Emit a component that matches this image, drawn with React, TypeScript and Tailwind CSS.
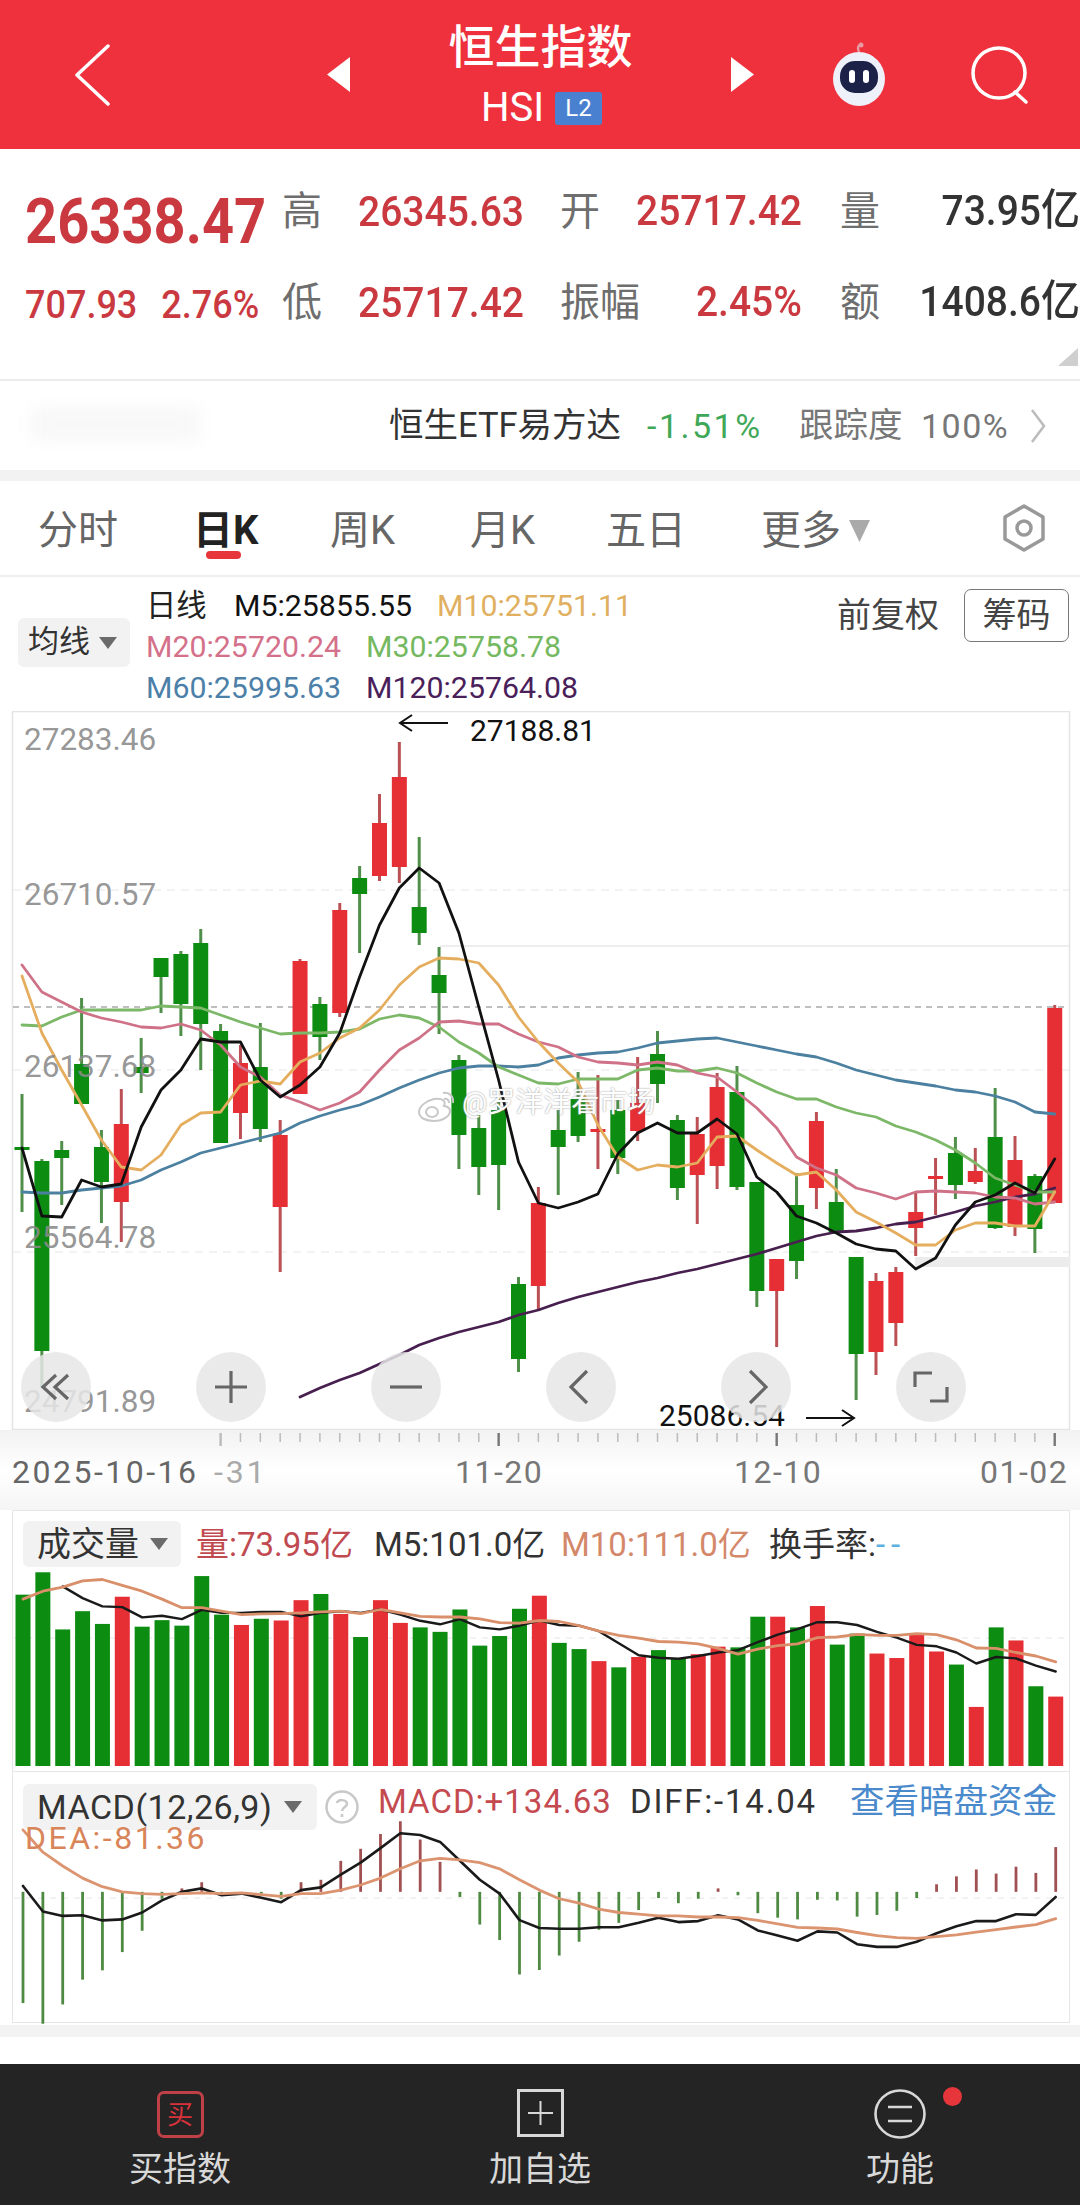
import React from "react";

const X = (i: number) => 22 + 19.86 * i;
const RED = "#e62e35";
const GREEN = "#0d8c12";
const WRED = "#bb5055";
const WGREEN = "#4f8f4a";

// [up?, wickTop, bodyTop, bodyBottom, wickBottom]
const candles: [number, number, number, number, number][] = [
  [0, 1094, 1147, 1150, 1212], [0, 1159, 1161, 1351, 1388], [0, 1141, 1150, 1158, 1205], [0, 998, 1064, 1104, 1104],
  [0, 1130, 1147, 1182, 1223], [1, 1089, 1124, 1202, 1242], [0, 1038, 1067, 1073, 1093], [0, 958, 958, 977, 1013],
  [0, 951, 954, 1004, 1036], [0, 929, 943, 1024, 1070], [0, 1024, 1031, 1143, 1143], [1, 1045, 1063, 1113, 1139],
  [0, 1023, 1067, 1129, 1142], [1, 1120, 1135, 1207, 1272], [1, 959, 961, 1094, 1094], [0, 997, 1004, 1037, 1060],
  [1, 903, 910, 1013, 1017], [0, 866, 878, 894, 953], [1, 794, 823, 876, 881], [1, 742, 777, 867, 883],
  [0, 837, 907, 933, 945], [0, 947, 975, 993, 1034], [0, 1055, 1060, 1135, 1169], [0, 1115, 1128, 1167, 1195],
  [0, 1095, 1110, 1165, 1210], [0, 1277, 1284, 1359, 1372], [1, 1187, 1203, 1286, 1310], [0, 1110, 1130, 1147, 1195],
  [0, 1072, 1099, 1136, 1142], [1, 1075, 1129, 1132, 1169], [0, 1100, 1110, 1158, 1174], [1, 1057, 1103, 1131, 1141],
  [0, 1031, 1054, 1084, 1103], [0, 1115, 1120, 1188, 1200], [1, 1117, 1134, 1175, 1224], [1, 1073, 1087, 1166, 1189],
  [0, 1066, 1092, 1187, 1190], [0, 1182, 1182, 1291, 1307], [1, 1259, 1259, 1291, 1347], [0, 1173, 1205, 1261, 1279],
  [1, 1112, 1121, 1188, 1209], [0, 1169, 1202, 1233, 1233], [0, 1257, 1257, 1354, 1400], [1, 1273, 1281, 1352, 1375],
  [1, 1267, 1272, 1323, 1346], [1, 1192, 1212, 1228, 1256], [1, 1158, 1176, 1179, 1215], [0, 1137, 1153, 1185, 1199],
  [1, 1148, 1171, 1182, 1184], [0, 1088, 1137, 1228, 1229], [1, 1136, 1160, 1227, 1236], [0, 1174, 1176, 1229, 1253],
  [1, 1005, 1008, 1203, 1203],
];

const m5 = [1148, 1216, 1217, 1180, 1187, 1184, 1127, 1090, 1070, 1039, 1042, 1042, 1080, 1097, 1085, 1067, 1033, 977, 925, 888, 868, 883, 933, 1007, 1080, 1162, 1203, 1208, 1202, 1194, 1154, 1133, 1123, 1133, 1133, 1119, 1134, 1177, 1192, 1216, 1223, 1233, 1244, 1249, 1251, 1269, 1258, 1225, 1202, 1195, 1183, 1193, 1159];
const m10 = [976, 1033, 1070, 1105, 1140, 1167, 1170, 1155, 1125, 1113, 1112, 1085, 1081, 1084, 1062, 1053, 1038, 1028, 1010, 985, 967, 958, 959, 963, 985, 1017, 1042, 1063, 1082, 1125, 1157, 1170, 1165, 1167, 1163, 1137, 1136, 1150, 1163, 1175, 1172, 1190, 1212, 1222, 1233, 1245, 1245, 1230, 1223, 1223, 1226, 1226, 1192];
const m20 = [965, 992, 1002, 1012, 1018, 1022, 1027, 1028, 1024, 1030, 1045, 1067, 1077, 1095, 1102, 1110, 1103, 1092, 1070, 1050, 1038, 1022, 1021, 1024, 1024, 1034, 1042, 1047, 1057, 1062, 1063, 1065, 1062, 1065, 1073, 1077, 1092, 1108, 1128, 1157, 1168, 1175, 1188, 1193, 1199, 1192, 1191, 1192, 1193, 1197, 1198, 1204, 1202];
const m30 = [1025, 1026, 1017, 1010, 1010, 1010, 1010, 1006, 1007, 1008, 1015, 1022, 1028, 1034, 1033, 1033, 1032, 1029, 1019, 1015, 1018, 1027, 1042, 1053, 1067, 1075, 1083, 1084, 1079, 1079, 1079, 1070, 1068, 1071, 1071, 1068, 1073, 1083, 1092, 1099, 1099, 1107, 1113, 1117, 1126, 1132, 1140, 1150, 1163, 1178, 1185, 1192, 1192];
const m60 = [1192, 1193, 1193, 1190, 1188, 1186, 1180, 1170, 1162, 1153, 1148, 1143, 1138, 1133, 1123, 1116, 1110, 1105, 1097, 1088, 1080, 1073, 1068, 1066, 1066, 1067, 1065, 1058, 1055, 1053, 1052, 1048, 1043, 1041, 1039, 1038, 1042, 1046, 1050, 1054, 1057, 1063, 1070, 1075, 1080, 1083, 1086, 1090, 1092, 1096, 1102, 1112, 1114];
const m120 = [1397, 1388, 1380, 1373, 1364, 1355, 1345, 1338, 1332, 1327, 1322, 1315, 1310, 1303, 1297, 1292, 1287, 1282, 1278, 1273, 1269, 1264, 1259, 1254, 1248, 1242, 1236, 1232, 1231, 1228, 1224, 1222, 1217, 1212, 1206, 1202, 1197, 1194, 1188];

const Z = (z: number) => 1500 + z / 2.904;
const volTops = [272, 207, 373, 320, 357, 278, 365, 346, 362, 218, 330, 360, 342, 347, 288, 270, 328, 395, 288, 354, 367, 380, 315, 420, 392, 313, 275, 412, 430, 465, 483, 453, 433, 458, 445, 423, 425, 336, 336, 367, 305, 417, 385, 443, 456, 388, 437, 475, 598, 367, 405, 538, 568];
const volRedIdx = new Set([5, 11, 13, 14, 16, 18, 19, 26, 29, 31, 34, 35, 38, 40, 43, 44, 45, 46, 48, 50, 52]);
const vm5 = [248, 282, 306, 308, 338, 333, 343, 316, 325, 325, 322, 322, 335, 325, 320, 325, 315, 330, 348, 358, 343, 367, 373, 362, 347, 360, 362, 378, 413, 448, 455, 458, 450, 440, 433, 410, 388, 372, 352, 352, 360, 380, 397, 418, 422, 440, 472, 453, 457, 478, 495];
const vm10 = [285, 262, 250, 232, 228, 245, 262, 285, 310, 310, 320, 330, 328, 327, 325, 322, 320, 327, 315, 325, 335, 337, 337, 342, 353, 355, 347, 350, 362, 378, 390, 398, 408, 410, 415, 428, 445, 430, 420, 415, 397, 395, 387, 390, 390, 385, 388, 403, 427, 428, 440, 450, 467];

const macdHist = [1458, 1518, 1462, 1390, 1363, 1310, 1248, 1155, 1125, 1107, 1140, 1135, 1140, 1155, 1107, 1100, 1045, 1010, 967, 930, 983, 1048, 1150, 1230, 1275, 1375, 1362, 1320, 1280, 1245, 1225, 1188, 1153, 1168, 1155, 1125, 1145, 1197, 1210, 1215, 1158, 1160, 1207, 1202, 1190, 1153, 1113, 1090, 1070, 1082, 1062, 1080, 1005];
const diff = [1118, 1192, 1205, 1203, 1218, 1215, 1195, 1160, 1135, 1125, 1145, 1140, 1152, 1165, 1130, 1122, 1085, 1050, 1008, 965, 970, 990, 1045, 1100, 1140, 1217, 1240, 1242, 1242, 1238, 1238, 1225, 1210, 1223, 1220, 1203, 1215, 1247, 1262, 1277, 1250, 1253, 1287, 1295, 1295, 1280, 1255, 1235, 1220, 1220, 1200, 1202, 1150];
const dea = [955, 1020, 1060, 1095, 1120, 1135, 1140, 1142, 1140, 1138, 1140, 1138, 1143, 1148, 1140, 1140, 1130, 1115, 1095, 1068, 1045, 1038, 1042, 1050, 1068, 1100, 1130, 1155, 1168, 1185, 1195, 1200, 1205, 1205, 1208, 1208, 1210, 1218, 1228, 1238, 1240, 1243, 1253, 1262, 1268, 1270, 1265, 1260, 1252, 1245, 1237, 1230, 1213];

const line = (ys: number[], start = 0) => ys.map((y, k) => `${X(k + start).toFixed(1)},${y.toFixed(1)}`).join(" ");

function Line({ ys, start = 0, color, w = 2.8 }: { ys: number[]; start?: number; color: string; w?: number }) {
  return <polyline points={line(ys, start)} fill="none" stroke={color} strokeWidth={w} strokeLinejoin="round" strokeLinecap="round" />;
}

function Caret({ className = "" }: { className?: string }) {
  return (
    <svg viewBox="0 0 18 12" className={`w-[18px] h-[12px] ${className}`}>
      <path d="M0 0H18L9 12Z" fill="#6b6b6b" />
    </svg>
  );
}

function PriceChart() {
  return (
    <svg viewBox="0 711 1080 719" className="absolute inset-0 w-full h-full">
      <rect x="12.5" y="711.5" width="1057" height="718" fill="none" stroke="#e4e4e4" strokeWidth="1.5" />
      <line x1="13" x2="1069" y1="890" y2="890" stroke="#e6e6e6" strokeDasharray="8 6" />
      <line x1="13" x2="1069" y1="1070" y2="1070" stroke="#e6e6e6" strokeDasharray="8 6" />
      <line x1="13" x2="1069" y1="1252" y2="1252" stroke="#e6e6e6" strokeDasharray="8 6" />
      <line x1="440" x2="1069" y1="946" y2="946" stroke="#e8e8e8" strokeWidth="1.5" />
      <rect x="915" y="1257" width="155" height="10" fill="#ececec" />
      <line x1="13" x2="1069" y1="1007" y2="1007" stroke="#aaaaaa" strokeWidth="1.5" strokeDasharray="6 5" />
      {candles.map(([up, wt, bt, bb, wb], i) => (
        <g key={i}>
          <line x1={X(i)} x2={X(i)} y1={wt} y2={wb} stroke={up ? WRED : WGREEN} strokeWidth="3" />
          <rect x={X(i) - 7.5} y={bt} width="15" height={bb - bt} fill={up ? RED : GREEN} />
        </g>
      ))}
      <Line ys={m120} start={14} color="#47204f" />
      <Line ys={m60} color="#4c80a0" />
      <Line ys={m30} color="#7cb868" />
      <Line ys={m20} color="#cf7288" />
      <Line ys={m10} color="#e5ae5e" />
      <Line ys={m5} color="#111111" w={2.8} />
    </svg>
  );
}

function Overlay({ x, y, c, children }: { x: number; y: number; c: string; children: React.ReactNode }) {
  return (
    <span className={`absolute -translate-y-1/2 whitespace-nowrap ${c}`} style={{ left: x, top: y - 711 }}>
      {children}
    </span>
  );
}

function RoundBtn({ x, children }: { x: number; children: React.ReactNode }) {
  return (
    <div
      className="absolute w-[70px] h-[70px] rounded-full bg-[#e6e6e6]/85 flex items-center justify-center"
      style={{ left: x - 35, top: 1387 - 711 - 35 }}
    >
      <svg viewBox="0 0 40 40" className="w-[40px] h-[40px]" fill="none" stroke="#666666" strokeWidth="3.2">
        {children}
      </svg>
    </div>
  );
}

function Footer() {
  return (
    <div className="h-[141px] bg-[#242424] grid grid-cols-3 text-[#d8d8d8] text-[34px]">
      <div className="flex flex-col items-center pt-[27px]">
        <div className="w-[47px] h-[47px] rounded-[7px] border-[3px] border-[#c04048] flex items-center justify-center text-[#d8323c] text-[26px] leading-none">买</div>
        <div className="leading-[40px] mt-[11px]">买指数</div>
      </div>
      <div className="flex flex-col items-center pt-[25px]">
        <svg viewBox="0 0 47 48" className="w-[47px] h-[48px]" fill="none" stroke="#d8d8d8" strokeWidth="3">
          <rect x="1.5" y="1.5" width="44" height="45" />
          <path d="M23.5 12V36M11 24H36" strokeWidth="2" />
        </svg>
        <div className="leading-[40px] mt-[12px]">加自选</div>
      </div>
      <div className="flex flex-col items-center pt-[25px] relative">
        <svg viewBox="0 0 52 50" className="w-[52px] h-[50px]" fill="none" stroke="#d8d8d8" strokeWidth="2.6">
          <ellipse cx="26" cy="25" rx="24.5" ry="23.5" />
          <path d="M14 18H38M14 32H38" />
        </svg>
        <div className="leading-[40px] mt-[10px]">功能</div>
        <span className="absolute left-[223px] top-[23px] w-[19px] h-[19px] rounded-full bg-[#e6363c]" />
      </div>
    </div>
  );
}

export default function App() {
  return (
    <div className="w-[1080px] h-[2206px] bg-white overflow-hidden" style={{ fontFamily: "Roboto,'Noto Sans CJK SC',sans-serif" }}>
      {/* header */}
      <div className="h-[149px] bg-[#ee313c] flex items-center pl-[74px] text-white">
        <svg viewBox="0 0 36 62" className="w-[36px] h-[62px] shrink-0" fill="none" stroke="#ffffff" strokeWidth="3.5" strokeLinecap="round" strokeLinejoin="round">
          <path d="M34 2L3 31L34 60" />
        </svg>
        <svg viewBox="0 0 23 35" className="ml-[217px] w-[23px] h-[35px] shrink-0"><path d="M23 0V35L0 17.5Z" fill="#fff" /></svg>
        <div className="w-[381px] flex flex-col items-center">
          <div className="h-[60px] leading-[60px] text-[46px] font-medium">恒生指数</div>
          <div className="mt-[7px] h-[48px] flex items-center gap-[11px] pl-[2px]">
            <span className="text-[40px] leading-none">HSI</span>
            <span className="w-[47px] h-[33px] bg-[#4a80d0] rounded-[3px] flex items-center justify-center text-[24px] leading-none">L2</span>
          </div>
        </div>
        <svg viewBox="0 0 23 35" className="w-[23px] h-[35px] shrink-0"><path d="M0 0V35L23 17.5Z" fill="#fff" /></svg>
        <svg viewBox="0 0 52 66" className="ml-[79px] w-[52px] h-[66px] shrink-0">
          <path d="M26 10C24 6 25 3 28 3" fill="none" stroke="#e89aa0" strokeWidth="2.5" />
          <circle cx="28" cy="3" r="2.5" fill="#e89aa0" />
          <ellipse cx="26" cy="37" rx="26" ry="27" fill="#eef0fa" />
          <rect x="7" y="19" width="38" height="32" rx="15" fill="#1c2247" />
          <rect x="16" y="28" width="6" height="13" rx="3" fill="#fff" />
          <rect x="30" y="28" width="6" height="13" rx="3" fill="#fff" />
        </svg>
        <svg viewBox="0 0 59 58" className="ml-[86px] w-[59px] h-[58px] shrink-0" fill="none" stroke="#fff" strokeWidth="3.5" strokeLinecap="round">
          <ellipse cx="28" cy="27" rx="26" ry="25" />
          <path d="M44 46L55 56" />
        </svg>
      </div>

      {/* quote */}
      <div className="h-[232px] pt-[32px] border-b-2 border-[#ececec] relative">
        <div className="flex h-[62px] items-center text-[#6e6e6e] text-[40px]">
          <div className="w-[282px] pl-[25px] text-[#c9393f] text-[56px] font-bold leading-none scale-y-[1.12] translate-y-[10px]">26338.47</div>
          <div className="w-[76px]">高</div>
          <div className="w-[165px] text-[39px] text-[#c9393f] font-medium scale-y-[1.1]">26345.63</div>
          <div className="ml-[37px] w-[242px] flex justify-between"><span>开</span><span className="text-[39px] text-[#c9393f] font-medium scale-y-[1.1]">25717.42</span></div>
          <div className="ml-[38px] w-[240px] flex justify-between"><span>量</span><span className="text-[39px] text-[#333333] font-medium scale-y-[1.1] whitespace-nowrap">73.95亿</span></div>
        </div>
        <div className="flex h-[62px] mt-[29px] items-center text-[#6e6e6e] text-[40px]">
          <div className="w-[282px] pl-[25px] text-[#c9393f] text-[36px] font-medium flex gap-[24px] scale-y-[1.1] translate-y-[2px]"><span>707.93</span><span>2.76%</span></div>
          <div className="w-[76px]">低</div>
          <div className="w-[165px] text-[39px] text-[#c9393f] font-medium scale-y-[1.1]">25717.42</div>
          <div className="ml-[37px] w-[242px] flex justify-between"><span>振幅</span><span className="text-[39px] text-[#c9393f] font-medium scale-y-[1.1]">2.45%</span></div>
          <div className="ml-[38px] w-[240px] flex justify-between"><span>额</span><span className="text-[39px] text-[#333333] font-medium scale-y-[1.1] whitespace-nowrap">1408.6亿</span></div>
        </div>
        <svg viewBox="0 0 20 18" className="absolute right-[2px] bottom-[13px] w-[20px] h-[18px]"><path d="M20 0V18H0Z" fill="#cfcfcf" /></svg>
      </div>

      {/* ETF row */}
      <div className="h-[89px] flex items-center relative">
        <div className="absolute left-[30px] top-[26px] w-[170px] h-[34px] bg-[#f8f8f8] blur-sm" />
        <span className="ml-[389px] text-[34.5px] text-[#333333] leading-none w-[258px] whitespace-nowrap">恒生ETF易方达</span>
        <span className="text-[34px] text-[#3fa858] w-[152px] leading-none tracking-[2.5px]">-1.51%</span>
        <span className="text-[34.5px] text-[#777777] w-[122px] leading-none">跟踪度</span>
        <span className="text-[34px] text-[#777777] leading-none w-[109px] tracking-[1.5px]">100%</span>
        <svg viewBox="0 0 16 36" className="w-[16px] h-[36px]" fill="none" stroke="#bbbbbb" strokeWidth="2.5"><path d="M2 2L14 18L2 34" /></svg>
      </div>
      <div className="h-[11px] bg-[#f2f2f2]" />

      {/* tabs */}
      <div className="h-[96px] pt-[6px] border-b-2 border-[#eeeeee] flex pl-[38px] items-center text-[#666666] text-[40px] relative">
        <span className="w-[155px]">分时</span>
        <span className="w-[137px] text-[#222222] font-bold relative">
          日K
          <span className="absolute left-[13px] top-[50px] w-[35px] h-[8px] rounded-full bg-[#e6363c]" />
        </span>
        <span className="w-[140px]">周K</span>
        <span className="w-[136px]">月K</span>
        <span className="w-[155px]">五日</span>
        <span className="flex items-center gap-[8px]">更多<svg viewBox="0 0 21 22" className="w-[21px] h-[22px]"><path d="M0 0H21L10.5 22Z" fill="#aaaaaa" /></svg></span>
        <svg viewBox="0 0 48 48" className="absolute left-[1000px] top-[23px] w-[48px] h-[48px]" fill="none" stroke="#999999" strokeWidth="3.5">
          <path d="M24 2L43 13V35L24 46L5 35V13Z" strokeLinejoin="round" />
          <circle cx="24" cy="24" r="7" />
        </svg>
      </div>

      {/* legend */}
      <div className="h-[134px] flex items-start text-[30.3px]">
        <div className="ml-[18px] mt-[41px] w-[112px] h-[49px] bg-[#f2f2f2] rounded-[6px] flex items-center pl-[10px] gap-[9px] text-[31px] text-[#333333]">
          均线<Caret />
        </div>
        <div className="ml-[16px] mt-[8px] flex flex-col">
          <div className="h-[41px] flex items-center text-[#222222]">
            <span className="w-[88px]">日线</span>
            <span className="w-[203px] text-[#111111]">M5:25855.55</span>
            <span className="text-[#e0b060]">M10:25751.11</span>
          </div>
          <div className="h-[41px] flex items-center">
            <span className="w-[220px] text-[#d4708a]">M20:25720.24</span>
            <span className="text-[#74b860]">M30:25758.78</span>
          </div>
          <div className="h-[41px] flex items-center">
            <span className="w-[220px] text-[#4c80a8]">M60:25995.63</span>
            <span className="text-[#4a205a]">M120:25764.08</span>
          </div>
        </div>
        <div className="ml-auto mr-[11px] mt-[12px] flex items-center gap-[25px] text-[#444444] text-[34px]">
          <span>前复权</span>
          <span className="w-[105px] h-[53px] border-[1.5px] border-[#777777] rounded-[7px] flex items-center justify-center">筹码</span>
        </div>
      </div>

      {/* price chart */}
      <div className="relative h-[719px]">
        <PriceChart />
        {[
          ["27283.46", 740], ["26710.57", 895], ["26137.68", 1067], ["25564.78", 1238], ["24791.89", 1402],
        ].map(([t, y]) => (
          <Overlay key={t as string} x={24} y={y as number} c="text-[31.5px] text-[#8a8a8a]/90">{t}</Overlay>
        ))}
        <svg viewBox="0 0 50 20" className="absolute left-[398px] top-[2px] w-[50px] h-[20px]" fill="none" stroke="#111" strokeWidth="2">
          <path d="M50 10H2M14 2L2 10L14 18" />
        </svg>
        <Overlay x={470} y={730} c="text-[30px] text-[#111111]">27188.81</Overlay>
        <Overlay x={659} y={1415} c="text-[30px] text-[#111111]">25086.54</Overlay>
        <svg viewBox="0 0 50 20" className="absolute left-[806px] top-[697px] w-[50px] h-[20px]" fill="none" stroke="#111" strokeWidth="2">
          <path d="M0 10H48M36 2L48 10L36 18" />
        </svg>
        <svg viewBox="0 0 40 36" className="absolute left-[417px] top-[376px] w-[40px] h-[36px]" fill="none" stroke="#c8c8c8" strokeWidth="2">
          <path d="M17 12C8 14 2 20 2 25C2 31 9 34 17 34C26 34 33 29 33 24C33 20 28 19 27 19C29 14 26 11 17 12Z" fill="#ffffff" fillOpacity="0.6" />
          <ellipse cx="15" cy="25" rx="6" ry="5" />
          <path d="M26 6C32 5 37 9 36 16M27 12C30 11 32 13 32 16" />
        </svg>
        <Overlay x={462} y={1103} c="text-[28px] text-white [text-shadow:0_0_2px_#8a8a8a]">@罗洋洋看市场</Overlay>
        <RoundBtn x={56}><path d="M20 8L7 20L20 32M32 8L19 20L32 32" /></RoundBtn>
        <RoundBtn x={231}><path d="M20 4V36M4 20H36" /></RoundBtn>
        <RoundBtn x={406}><path d="M4 20H36" /></RoundBtn>
        <RoundBtn x={581}><path d="M26 4L10 20L26 36" /></RoundBtn>
        <RoundBtn x={756}><path d="M14 4L30 20L14 36" /></RoundBtn>
        <RoundBtn x={931}><path d="M21 6H4V20M19 34H36V20" /></RoundBtn>
      </div>

      {/* date axis */}
      <div className="relative h-[80px] bg-gradient-to-b from-[#f2f2f2] via-white to-[#f5f5f5]">
        <svg viewBox="0 1430 1080 20" className="absolute left-0 top-0 w-[1080px] h-[20px]">
          {candles.map((_, i) => {
            const major = i === 10 || i === 24 || i === 38 || i === 52;
            if (i < 10) return null;
            return <line key={i} x1={X(i)} x2={X(i)} y1="1433" y2={major ? 1446 : 1442} stroke={major ? (i === 10 ? "#bbbbbb" : "#777777") : "#bbbbbb"} strokeWidth={major ? 2.4 : 1.5} />;
          })}
        </svg>
        <div className="flex h-full pt-[22px] text-[32px] text-[#777777] tracking-[1.5px] leading-[40px]">
          <span className="ml-[12px] w-[202px] whitespace-nowrap text-[#666666] tracking-[2.5px]">2025-10-16</span>
          <span className="w-[241px] text-[#aaaaaa] tracking-[3px]">-31</span>
          <span className="w-[279px]">11-20</span>
          <span className="w-[246px]">12-10</span>
          <span>01-02</span>
        </div>
      </div>

      {/* volume panel */}
      <div className="relative h-[261px] border-x-[1.5px] border-t-[1.5px] border-[#e6e6e6] ml-[12px] w-[1058px]">
        <svg viewBox="12 1510 1058 261" className="absolute left-0 top-0 w-[1058px] h-[261px]">
          <line x1="13" x2="1069" y1="1637" y2="1637" stroke="#e6e6e6" strokeDasharray="6 6" />
          {volTops.map((z, i) => (
            <rect key={i} x={X(i) - 7.5} y={Z(z)} width="15" height={1765 - Z(z)} fill={volRedIdx.has(i) ? RED : GREEN} />
          ))}
          <Line ys={vm5.map(Z)} start={2} color="#1a1a1a" w={2.4} />
          <Line ys={vm10.map(Z)} color="#d9906a" />
        </svg>
        <div className="relative flex items-center pt-[10px] h-[56px] text-[33px] leading-none">
          <div className="ml-[10px] w-[158px] h-[46px] bg-[#f2f2f2] rounded-[6px] flex items-center pl-[14px] gap-[11px] text-[#333333] text-[34px]">成交量<Caret /></div>
          <span className="ml-[15px] w-[178px] text-[#c04a50] whitespace-nowrap">量:73.95亿</span>
          <span className="w-[187px] text-[#333333] whitespace-nowrap">M5:101.0亿</span>
          <span className="w-[208px] text-[#d4886a] whitespace-nowrap">M10:111.0亿</span>
          <span className="text-[#333333] whitespace-nowrap">换手率:<span className="text-[#5ab0e0] tracking-[6px]">--</span></span>
        </div>
      </div>

      {/* macd panel */}
      <div className="relative h-[252px] border-x-[1.5px] border-y-[1.5px] border-[#e6e6e6] ml-[12px] w-[1058px]">
        <svg viewBox="12 1771 1058 252" className="absolute left-0 top-0 w-[1058px] h-[252px]">
          <line x1="13" x2="1069" y1="1897" y2="1897" stroke="#e6e6e6" strokeDasharray="6 6" />
          {macdHist.map((z, i) => {
            const y = Z(z);
            const zero = Z(1135);
            const isRed = z < 1135;
            return <line key={i} x1={X(i)} x2={X(i)} y1={zero} y2={y} stroke={isRed ? "#a05050" : "#4f8a42"} strokeWidth="2.8" />;
          })}
          <Line ys={diff.map(Z)} color="#1a1a1a" w={2.6} />
          <Line ys={dea.map(Z)} color="#dc9470" />
        </svg>
        <div className="relative flex items-center pt-[12px] h-[58px] text-[33px] leading-none">
          <div className="ml-[10px] w-[294px] h-[46px] bg-[#f2f2f2] rounded-[6px] flex items-center pl-[14px] gap-[12px] text-[#333333] text-[34px] whitespace-nowrap tracking-[0.5px]">MACD(12,26,9)<Caret /></div>
          <svg viewBox="0 0 34 34" className="ml-[8px] w-[34px] h-[34px]" fill="none"><circle cx="17" cy="17" r="15.5" stroke="#c8c8c8" strokeWidth="2.5" /><path d="M12 13C12 9 22 9 22 14C22 17 17 17 17 21M17 24V27" stroke="#c8c8c8" strokeWidth="2.5" /></svg>
          <span className="ml-[19px] -mt-[12px] w-[252px] text-[#c44a50] whitespace-nowrap tracking-[1px]">MACD:+134.63</span>
          <span className="-mt-[12px] w-[220px] text-[#333333] whitespace-nowrap tracking-[1.8px]">DIFF:-14.04</span>
          <span className="-mt-[12px] text-[#4a8acc] text-[34.5px] whitespace-nowrap">查看暗盘资金</span>
        </div>
        <div className="relative ml-[12px] -mt-[8px] text-[32px] text-[#d9855a] leading-none tracking-[2.5px]">DEA:-81.36</div>
      </div>

      <div className="h-[12px] mt-[2px] bg-[#f3f3f3]" />
      <div className="h-[27px] bg-white" />
      <Footer />
    </div>
  );
}
